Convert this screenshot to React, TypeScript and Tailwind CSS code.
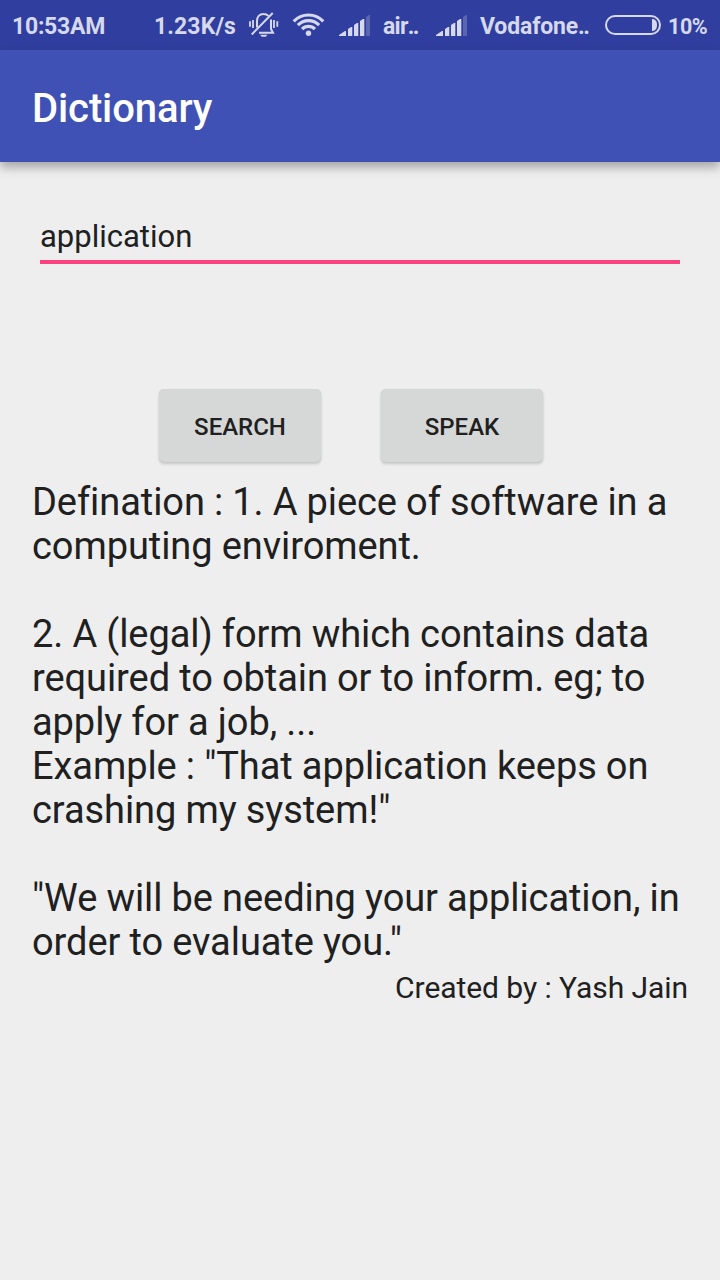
function BellOff() {
  return (
    <svg className="ml-[13px] h-[50px] w-[30px] shrink-0" viewBox="0 0 30 50" fill="none" stroke="#d6d8ec">
      <path d="M1 21.300v5.400M4 20v8M28.300 21.300v5.400M25 20v8" strokeWidth="1.800" />
      <path d="M8 27.500v-6.500C8 16.800 10.500 14 14.500 14c2 0 3.800 .7 5 1.900M22 19.500v9.500l2 3.700H10" strokeWidth="2" />
      <path d="M2.700 34.500L23.700 13" strokeWidth="2" />
      <path d="M11 34.800h7.500l-1.800 2h-3.900z" fill="#d6d8ec" stroke="none" />
    </svg>
  );
}

function Wifi() {
  return (
    <svg className="ml-[13px] h-[50px] w-[34px] shrink-0" viewBox="0 0 34 50" fill="none" stroke="#d6d8ec" strokeWidth="3.200">
      <path d="M1.700 21.300a20.500 20.500 0 0 1 29.600 0" />
      <path d="M5.900 25.200a14.500 14.500 0 0 1 21.200 0" />
      <path d="M10.100 29.200a8.700 8.700 0 0 1 12.800 0" />
      <circle cx="16.500" cy="33.300" r="2.700" fill="#d6d8ec" stroke="none" />
    </svg>
  );
}

function Signal() {
  return (
    <svg className="h-[50px] w-[32px] shrink-0" viewBox="0 0 32 50" fill="#d6d8ec">
      <path d="M0 36v-1l6-4h1v5zM9 36v-7l3-2h1.300v9zM15 36V25l3-2h1.300v13zM21 36V21l3-2h1.300v17z" />
      <path d="M27 36V17l3-2h1v21z" opacity=".25" />
    </svg>
  );
}

function Battery() {
  return (
    <svg className="ml-[15px] h-[50px] w-[57px] shrink-0" viewBox="0 0 57 50" fill="none">
      <rect x="1" y="16" width="54" height="18" rx="9" stroke="#d6d8ec" strokeWidth="2" />
      <path d="M47 19c3.500 0 5 2.500 5 6s-1.500 6-5 6z" fill="#d6d8ec" />
    </svg>
  );
}

function StatusBar() {
  return (
    <header className="flex h-[50px] items-center overflow-hidden bg-[#303f9f] pl-3 text-[23px] font-bold leading-[46px] whitespace-nowrap text-[#d6d8ec]">
      <span className="w-[142px] shrink-0 pt-1 tracking-[-0.25px]">10:53AM</span>
      <span className="w-[82px] shrink-0 pt-1 tracking-[0.1px]">1.23K/s</span>
      <BellOff />
      <Wifi />
      <div className="ml-[13px] flex"><Signal /></div>
      <span className="ml-3 w-[36px] shrink-0 pt-1 tracking-[-0.7px]">air<span className="tracking-[-1.6px]">..</span></span>
      <div className="ml-[17px] flex"><Signal /></div>
      <span className="ml-3 w-[110px] shrink-0 pt-1 tracking-[-0.15px]">Vodafone<span className="tracking-[-1.6px]">..</span></span>
      <Battery />
      <span className="ml-[6px] pt-1 text-[21.500px] tracking-[-0.4px]">10%</span>
    </header>
  );
}

const buttonClass =
  "h-[73px] w-[162px] rounded-[5px] bg-[#d6d7d7] pt-[3px] text-[24px] font-medium leading-[70px] text-[#202020] shadow-[0_2px_3px_rgba(0,0,0,0.18),0_0_1px_rgba(0,0,0,0.1)]";

export default function App() {
  return (
    <div className="flex h-[1280px] w-[720px] flex-col overflow-hidden bg-[#eeeeee] font-[Roboto,sans-serif] text-[#202020]">
      <StatusBar />
      <div className="relative flex h-[112px] items-center bg-[#3f51b5] pl-8 shadow-[0_5px_10px_rgba(0,0,0,0.32)]">
        <h1 className="pt-1.5 text-[40px] font-medium leading-[48px] tracking-[-0.1px] text-white">Dictionary</h1>
      </div>
      <main className="flex flex-col">
        <input
          aria-label="Word"
          defaultValue="application"
          className="mx-10 mt-[54px] h-[48px] border-b-4 border-[#ff4081] bg-transparent pb-1 text-[31px] leading-[40px] outline-none"
        />
        <div className="mt-[125px] ml-[159px] flex gap-[60px]">
          <button className={buttonClass}>SEARCH</button>
          <button className={buttonClass}>SPEAK</button>
        </div>
        <p className="mt-[18px] ml-8 text-[38px] leading-[44px] tracking-[-0.07px] [word-spacing:-0.2px] whitespace-pre">
          {`Defination : 1. A piece of software in a
computing enviroment.

2. A (legal) form which contains data
required to obtain or to inform. eg; to
apply for a job, ...
Example : "That application keeps on
crashing my system!"

"We will be needing your application, in
order to evaluate you."`}
        </p>
        <p className="mt-[6px] mr-8 text-right text-[30px] leading-[36px] tracking-[-0.06px]">Created by : Yash Jain</p>
      </main>
    </div>
  );
}
